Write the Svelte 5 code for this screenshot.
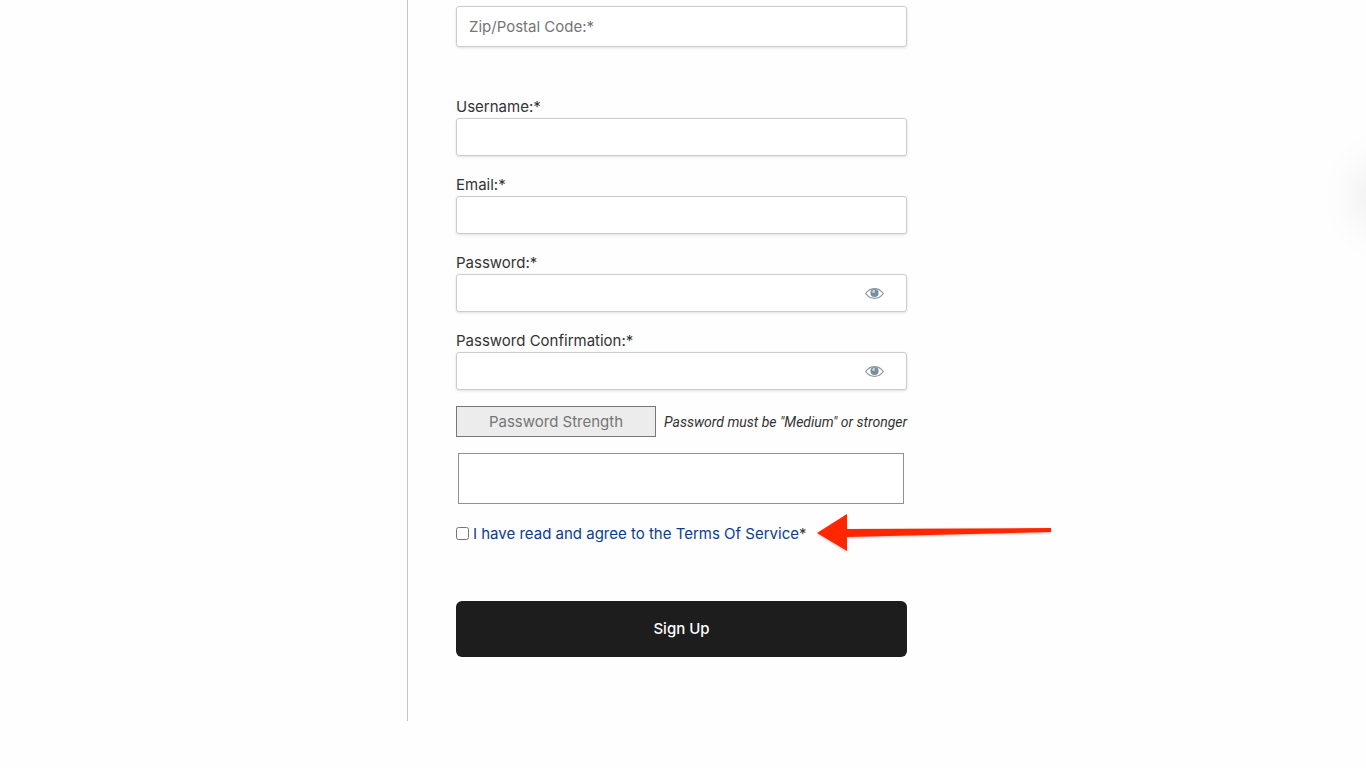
<script lang="ts">
	interface Field {
		id: string;
		label: string;
		type: 'text' | 'email' | 'password';
	}

	const fields: Field[] = [
		{ id: 'username', label: 'Username:*', type: 'text' },
		{ id: 'email', label: 'Email:*', type: 'email' },
		{ id: 'password', label: 'Password:*', type: 'password' },
		{ id: 'password-confirm', label: 'Password Confirmation:*', type: 'password' }
	];

	let values = $state<Record<string, string>>({});
	let visible = $state<Record<string, boolean>>({});
	let zip = $state('');
	let agreed = $state(false);

	function toggle(id: string) {
		visible[id] = !visible[id];
	}

	function handleSubmit(e: SubmitEvent) {
		e.preventDefault();
	}
</script>

<main>
	<form class="signup" onsubmit={handleSubmit}>
		<input class="input zip" type="text" placeholder="Zip/Postal Code:*" aria-label="Zip/Postal Code" bind:value={zip} />

		{#each fields as field (field.id)}
			<div class="field">
				<label for={field.id}>{field.label}</label>
				<div class="control">
					<input
						id={field.id}
						class="input"
						type={visible[field.id] ? 'text' : field.type}
						value={values[field.id] ?? ''}
						oninput={(e) => (values[field.id] = e.currentTarget.value)}
					/>
					{#if field.type === 'password'}
						<button class="eye" type="button" aria-label="Show password" onclick={() => toggle(field.id)}>
							<svg viewBox="0 0 20 14" width="20" height="14" aria-hidden="true">
								<path d="M1.7 7.5C4 4.2 6.8 2.6 10.500 2.600S17 4.200 19.300 7.500C17 10.800 14.200 12.400 10.500 12.400S4 10.800 1.700 7.500Z" fill="#fff" stroke="#8b9ba6" stroke-width="1.300" />
								<circle cx="10.500" cy="7" r="4.100" fill="#7b8e9b" />
								<path d="M10.800 3.600V6.800H8.200C8.100 5.100 9 3.900 10.800 3.600Z" fill="#cfd8de" />
							</svg>
						</button>
					{/if}
				</div>
			</div>
		{/each}

		<div class="strength">
			<span class="meter">Password Strength</span>
			<em>Password must be "Medium" or stronger</em>
		</div>

		<div class="card-box"></div>

		<div class="terms">
			<input id="terms" type="checkbox" bind:checked={agreed} />
			<label for="terms"><a href="#terms">I have read and agree to the Terms Of Service</a>*</label>
			<svg class="arrow" viewBox="0 0 238 44" width="238" height="44" aria-hidden="true">
				<path d="M1 20L31 1V16L235 15V19L31 24V38Z" fill="#ff2600" />
			</svg>
		</div>

		<button class="submit" type="submit">Sign Up</button>
	</form>
</main>

<div class="drawer" aria-hidden="true"></div>

<style>
	:global(body) {
		background: #fefefe;
		overflow-x: hidden;
	}

	main {
		font-family: Inter, Roboto, sans-serif;
		font-size: 15px;
		line-height: 24px;
		color: #333;
	}

	.signup {
		box-sizing: border-box;
		max-width: 552px;
		margin: 0 auto;
		padding: 6px 52px 64px 48px;
		border-left: 1px solid #c4c4c4;
	}

	.input {
		display: block;
		box-sizing: border-box;
		width: 100%;
		height: 38px;
		padding: 0 12px;
		border: 1px solid #ccc;
		border-radius: 3px;
		background: #fff;
		box-shadow: 0 1px 3px rgba(0, 0, 0, 0.12);
		font: inherit;
		color: inherit;
	}

	.input::placeholder {
		color: #757575;
		opacity: 1;
	}

	.zip {
		height: 41px;
		margin-bottom: 47px;
	}

	.field {
		margin-bottom: 16px;
	}

	.field label,
	.terms label {
		display: block;
		padding-top: 2px;
		line-height: 22px;
	}

	.control {
		position: relative;
	}

	/* sits over the right end of the password box */
	.eye {
		position: absolute;
		top: 0;
		bottom: 0;
		right: 16px;
		display: flex;
		align-items: center;
		padding: 0 7px;
		border: 0;
		background: none;
		cursor: pointer;
	}

	.strength {
		display: flex;
		align-items: center;
		gap: 8px;
		margin-bottom: 16px;
	}

	.meter {
		box-sizing: border-box;
		flex: 0 0 200px;
		height: 31px;
		border: 1px solid #777;
		background: #ececec;
		line-height: 29px;
		text-align: center;
		color: #757575;
	}

	.strength em {
		font-family: Roboto, sans-serif;
		font-size: 14px;
		white-space: nowrap;
	}

	.card-box {
		box-sizing: border-box;
		height: 51px;
		margin: 0 3px 17px 2px;
		border: 1px solid #919191;
		background: #fff;
	}

	.terms {
		position: relative;
		display: flex;
		align-items: center;
		gap: 4px;
		margin-bottom: 56px;
		white-space: nowrap;
	}

	.terms input {
		width: 13px;
		height: 13px;
		margin: 0;
	}

	.terms a {
		color: #0b3d91;
		text-decoration: none;
	}

	.arrow {
		position: absolute;
		left: 360px;
		top: -8px;
		filter: drop-shadow(0 1px 1px rgba(0, 0, 0, 0.25));
		pointer-events: none;
	}

	.submit {
		display: block;
		width: 100%;
		height: 56px;
		border: 0;
		border-radius: 6px;
		background: #1d1d1d;
		color: #fff;
		font: inherit;
		font-weight: 500;
		cursor: pointer;
	}

	/* closed drawer, only its shadow reaches the page */
	.drawer {
		position: fixed;
		top: 172px;
		left: 100%;
		width: 48px;
		height: 48px;
		box-shadow: 0 0 48px rgba(0, 0, 0, 0.12);
	}
</style>
